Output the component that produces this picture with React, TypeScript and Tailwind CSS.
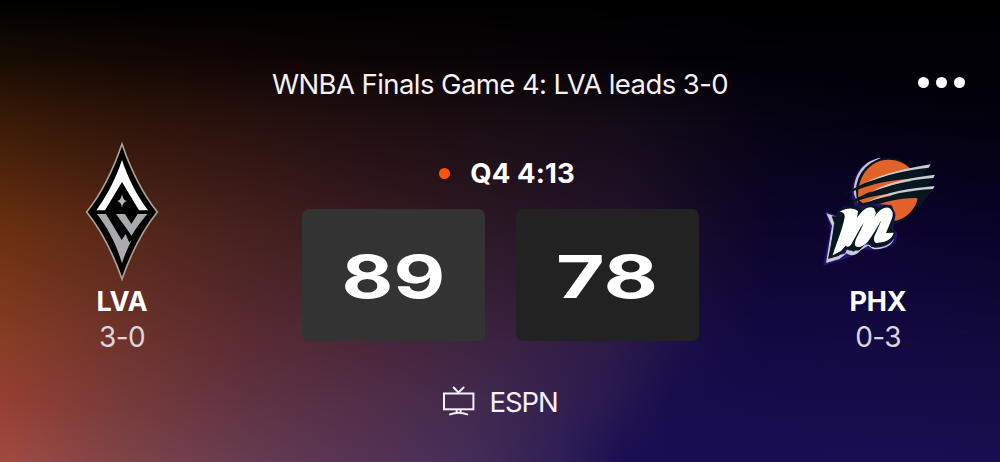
import React from "react";

interface Team {
  code: string;
  record: string;
  logo: React.ReactNode;
}

function AcesLogo() {
  return (
    <svg width="100" height="160" viewBox="0 0 300 480" className="block">
      <path
        d="M150 36C176 112 211 184 256 240C211 296 176 367 150 441C124 367 89 296 44 240C89 184 124 112 150 36Z"
        fill="#000"
        stroke="#aaa09b"
        strokeWidth="5"
      />
      <path
        d="M150 84C168 138 194 189 228 235H201L150 150L99 235H73C106 189 132 138 150 84Z"
        fill="#fff"
      />
      <path
        d="M150 185Q152 203 164 207Q152 211 150 227Q148 211 136 207Q148 203 150 185Z"
        fill="#b4b5b7"
      />
      <path
        d="M75 246H102L149 324L161 306L172 332L180 322C168 347 158 368 150 394C134 340 110 291 75 246Z"
        fill="#a8aaad"
      />
      <path d="M132 246H159L178 276L197 246H226C207 268 192 288 179 311Z" fill="#a8aaad" />
    </svg>
  );
}

function MercuryLogo() {
  return (
    <svg width="140" height="130" viewBox="-6 0 420 390" className="block">
      <path
        d="M210 39C158 43 123 92 126 153L134 192L154 187C134 115 160 60 210 39Z"
        fill="#2b1270"
      />
      <path
        d="M214 38C160 45 128 92 132 148L143 174C136 115 157 65 214 38Z"
        fill="#c3c6d2"
      />
      <ellipse cx="235" cy="138" rx="97" ry="100" fill="#06171f" />
      <path
        d="M235 44C287 44 325 82 326 135C327 189 286 228 243 228L190 198L145 164C138 96 180 44 235 44Z"
        fill="#e3622a"
      />
      <path
        d="M96 153C170 100 270 78 362 58L357 68L340 88L374 90L370 100L351 122L374 124L369 133C350 154 340 176 322 190C328 177 327 166 320 159C258 160 196 173 140 209L138 184C172 169 208 159 240 154L260 145C200 148 148 161 94 190C158 144 212 124 302 109L307 101C221 106 160 123 96 153Z"
        fill="#06171f"
      />
      <path d="M164 114C220 85 292 70 362 58L356 68C288 75 228 90 164 114Z" fill="#c9ccd2" />
      <path d="M178 143C238 108 302 98 375 89L370 99C302 103 244 119 178 143Z" fill="#c9ccd2" />
      <path d="M166 174C230 139 300 130 374 123L369 132C301 136 237 147 166 174Z" fill="#c9ccd2" />
      <path
        d="M50 204L88 219L85 203L105 188L145 189L190 180L242 184L253 210L244 251L258 266L254 289L230 304L180 311L153 308L129 327L84 345L44 358L66 250Z"
        fill="#28126f"
        stroke="#28126f"
        strokeWidth="8"
        strokeLinejoin="round"
      />
      <path
        d="M49 205L88 218L92 234L72 236L59 334L83 331L105 326L113 310L131 320L156 298L180 299L193 308C216 310 244 299 252 280C249 301 220 316 189 312L174 302L153 315C139 333 120 334 110 325L88 342L48 354L66 242Z"
        fill="#c9ccd7"
      />
      <path
        d="M67 215L88 216L84 204L95 191L124 183L146 185L157 195L184 178L205 190L224 181L244 187L253 206L242 252L255 260L249 281L225 300L185 305L171 292L147 315L118 315L107 310L87 331L56 340L76 239Z"
        fill="#06171f"
        stroke="#06171f"
        strokeWidth="3"
        strokeLinejoin="round"
      />
      <path
        d="M89 200C112 187 133 188 144 199L141 219C156 196 175 180 192 190L198 204L193 217C208 192 228 182 241 191C252 202 249 214 242 230L228 264L251 263C248 277 235 288 216 292L198 294C189 287 191 276 198 263L215 224C201 246 187 273 173 291C159 306 139 311 135 300C132 291 142 274 152 255L161 233C149 249 141 268 129 288C122 304 115 309 107 302L93 318L68 331C80 292 97 256 104 216C105 206 99 201 89 200Z"
        fill="#fff"
      />
    </svg>
  );
}

function TvIcon() {
  return (
    <svg
      width="33"
      height="30"
      viewBox="0 0 33 30"
      fill="none"
      stroke="#f4effa"
      strokeWidth="2"
      strokeLinecap="round"
    >
      <rect x="2" y="7.5" width="29.4" height="15.8" strokeLinejoin="miter" />
      <path d="M11.7 1.5L16.4 6.5L21.6 1.5" />
      <path d="M14.6 24V26.5M18.6 24V26.5M8 28.4Q16.6 25.2 25.2 28.4" strokeWidth="2" />
    </svg>
  );
}

// Each layer fades into the one above it, top to bottom
function Backdrop() {
  return (
    <div className="col-start-1 row-start-1 grid h-[462px] w-[1000px] bg-black *:col-start-1 *:row-start-1">
      <div className="bg-[linear-gradient(90deg,#160b03,#120703_12.5%,#0e0504_25%,#0a0405_37.5%,#070306_50%,#040207_62.5%,#010107_75%,#010106)] mask-[linear-gradient(180deg,transparent,#000_55px)]" />
      <div className="bg-[linear-gradient(90deg,#3a1b07,#2e1409_12.5%,#27110e_25%,#1f0e10_37.5%,#190d13_50%,#140b17_62.5%,#080414_75%,#040210_87.5%,#03020d)] mask-[linear-gradient(180deg,transparent_55px,#000_120px)]" />
      <div className="bg-[linear-gradient(90deg,#6c3010,#562819_12.5%,#46211f_25%,#371b20_37.5%,#2b1826_50%,#23132b_62.5%,#160b29_70%,#0c052c_77%,#0d0431_87.5%,#090329)] mask-[linear-gradient(180deg,transparent_120px,#000_230px)]" />
      <div className="bg-[linear-gradient(90deg,#8a3e26,#6f342e_12.5%,#5b2c34_25%,#4b273b_37.5%,#3c2343_50%,#2d1b49_61%,#180d47_70%,#130944_76%,#130a42_87.5%,#130a3e)] mask-[linear-gradient(180deg,transparent_230px,#000_345px)]" />
      <div className="bg-[linear-gradient(90deg,#963f32,#763b3a_12.5%,#603342_25%,#502e48_37.5%,#40294e_49%,#2c1b50_60%,#180d4d_67%,#160c4c_76%,#160c4a_87.5%,#160c48)] mask-[linear-gradient(180deg,transparent_345px,#000_400px)]" />
      <div className="bg-[linear-gradient(90deg,#a24b42,#7e4348_12.5%,#663b51_25%,#543356_37.5%,#422c58_48%,#2e1f57_56%,#190e53_62.5%,#190e53_75%,#190f51)] mask-[linear-gradient(180deg,transparent_400px,#000_462px)]" />
    </div>
  );
}

function TeamColumn({ team }: { team: Team }) {
  return (
    <div className="flex w-[244px] flex-col items-center">
      <div className="flex h-[154px] items-start">{team.logo}</div>
      <div className="text-[27px] leading-[32px] font-bold tracking-[-0.2px] text-white">
        {team.code}
      </div>
      <div className="mt-[3px] text-[28px] leading-[32px] tracking-[-0.6px] text-[#dcd5dc]">
        {team.record}
      </div>
    </div>
  );
}

const away: Team = { code: "LVA", record: "3-0", logo: <AcesLogo /> };
const home: Team = {
  code: "PHX",
  record: "0-3",
  logo: (
    <div className="pt-[13px]">
      <MercuryLogo />
    </div>
  ),
};

export default function App() {
  return (
    <div className="grid h-[462px] w-[1000px] overflow-hidden font-['Inter',sans-serif]">
      <Backdrop />

      <div className="z-10 col-start-1 row-start-1 flex flex-col">
        <header className="grid h-[132px] grid-cols-[1fr_auto_1fr] items-start pt-[65.5px]">
          <div />
          <h1 className="text-[27.5px] leading-[36px] tracking-[-0.58px] whitespace-nowrap text-[#f5f1f3]">
            WNBA Finals Game 4: LVA leads 3-0
          </h1>
          <button className="mt-[11px] mr-[35px] flex gap-[7px] justify-self-end">
            <span className="size-[11px] rounded-full bg-white" />
            <span className="size-[11px] rounded-full bg-white" />
            <span className="size-[11px] rounded-full bg-white" />
          </button>
        </header>

        <main className="flex h-[245px] justify-between">
          <TeamColumn team={away} />

          <div className="flex flex-col items-center">
            <div className="mt-[23px] flex h-[36px] items-center gap-[20px] pl-[14px]">
              <span className="size-[11px] rounded-full bg-[#ff5208]" />
              <span className="pt-[2px] text-[27.5px] font-bold tracking-[0.1px] text-white">
                Q4 4:13
              </span>
            </div>
            <div className="mt-[17.5px] flex gap-[31px] text-[59px] font-bold text-white">
              <div className="flex h-[132.5px] w-[183px] items-center justify-center rounded-[7px] bg-[#333333] pt-[4px]">
                <span className="scale-x-[1.35]">89</span>
              </div>
              <div className="flex h-[132.5px] w-[183px] items-center justify-center rounded-[7px] bg-[#222222] pt-[4px]">
                <span className="scale-x-[1.42]">78</span>
              </div>
            </div>
          </div>

          <TeamColumn team={home} />
        </main>

        <footer className="flex items-start justify-center gap-[14px] pt-[9px]">
          <TvIcon />
          <span className="text-[27.5px] leading-[32px] tracking-[-1.1px] text-[#f4effa]">
            ESPN
          </span>
        </footer>
      </div>
    </div>
  );
}
